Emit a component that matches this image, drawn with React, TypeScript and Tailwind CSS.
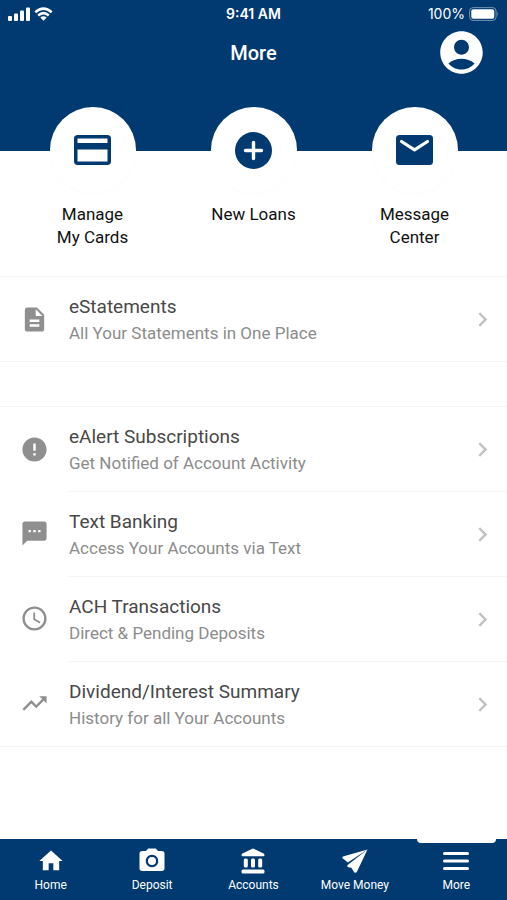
import React from "react";
import type { IconType } from "react-icons";
import {
  MdAccessTime,
  MdAccountCircle,
  MdChevronRight,
  MdDescription,
  MdError,
  MdHome,
  MdPhotoCamera,
  MdTextsms,
  MdTrendingUp,
} from "react-icons/md";

type IconProps = { className?: string };

interface MenuItem {
  title: string;
  subtitle: string;
  icon: IconType;
}

const statements: MenuItem[] = [
  {
    title: "eStatements",
    subtitle: "All Your Statements in One Place",
    icon: MdDescription,
  },
];

const services: MenuItem[] = [
  {
    title: "eAlert Subscriptions",
    subtitle: "Get Notified of Account Activity",
    icon: MdError,
  },
  {
    title: "Text Banking",
    subtitle: "Access Your Accounts via Text",
    icon: MdTextsms,
  },
  {
    title: "ACH Transactions",
    subtitle: "Direct & Pending Deposits",
    icon: MdAccessTime,
  },
  {
    title: "Dividend/Interest Summary",
    subtitle: "History for all Your Accounts",
    icon: MdTrendingUp,
  },
];

function CardIcon({ className }: IconProps) {
  return (
    <svg viewBox="0 0 37 30" className={className} aria-hidden="true">
      <rect x="1.75" y="1.75" width="33.5" height="26.5" rx="2" fill="none" stroke="currentColor" strokeWidth="3.5" />
      <path d="M2 8h33v6.5H2z" fill="currentColor" />
    </svg>
  );
}

function PlusIcon({ className }: IconProps) {
  return (
    <svg viewBox="0 0 37 37" className={className} aria-hidden="true">
      <circle cx="18.5" cy="18.5" r="18.5" fill="currentColor" />
      <path d="M18.5 10.5v16M10.5 18.5h16" stroke="white" strokeWidth="3.4" strokeLinecap="round" />
    </svg>
  );
}

function MailIcon({ className }: IconProps) {
  return (
    <svg viewBox="0 0 37 30" className={className} aria-hidden="true">
      <rect width="37" height="30" rx="3.5" fill="currentColor" />
      <path d="M5.5 6.5L18.5 14.8L31.5 6.5" fill="none" stroke="white" strokeWidth="3.2" strokeLinecap="round" strokeLinejoin="round" />
    </svg>
  );
}

function BankIcon({ className }: IconProps) {
  return (
    <svg viewBox="0 0 24 26" className={className} aria-hidden="true" fill="currentColor">
      <path d="M10.8 0.9Q12 0.3 13.200 0.900L22.600 5.600Q23.600 6.200 23.500 7.200Q23.400 8.200 22.300 8.200H1.700Q0.600 8.200 0.500 7.200Q0.400 6.200 1.400 5.600Z" />
      <rect x="2.800" y="10.500" width="4" height="9" rx="1.500" />
      <rect x="10" y="10.500" width="4" height="9" rx="1.500" />
      <rect x="17.200" y="10.500" width="4" height="9" rx="1.500" />
      <rect x="0.500" y="21.500" width="23" height="4" rx="1.500" />
    </svg>
  );
}

function PlaneIcon({ className }: IconProps) {
  return (
    <svg viewBox="0 0 26 24" className={className} aria-hidden="true" fill="currentColor">
      <path d="M25.500 0.500L1 7.400Q-0.200 8 0.700 9.200L5.800 13.400Z" />
      <path d="M25.500 0.500L5.600 16Q4.600 17.500 6.200 18.200L9.300 18.800L12.200 23.200Q13.600 24.400 14.800 22.900Z" />
    </svg>
  );
}

function MenuIcon({ className }: IconProps) {
  return (
    <svg viewBox="0 0 26 18" className={className} aria-hidden="true">
      <path d="M1.5 1.5h23M1.5 9h23M1.5 16.5h23" stroke="currentColor" strokeWidth="3" strokeLinecap="round" />
    </svg>
  );
}

function SignalIcon() {
  return (
    <svg viewBox="0 0 22 14" className="h-3.5 w-[22px]" fill="currentColor" aria-hidden="true">
      <rect x="0" y="9" width="4" height="5" rx="1" />
      <rect x="6" y="6.500" width="4" height="7.500" rx="1" />
      <rect x="12" y="3.500" width="4" height="10.500" rx="1" />
      <rect x="18" y="0.500" width="4" height="13.500" rx="1" />
    </svg>
  );
}

function WifiIcon() {
  return (
    <svg viewBox="0 0 19 14" className="h-3.5 w-[19px]" aria-hidden="true">
      <path d="M1.300 5.200Q9.500 -2 17.700 5.200M4.200 8.400Q9.500 4 14.800 8.400" fill="none" stroke="currentColor" strokeWidth="2.600" />
      <path d="M6.300 10.500Q9.500 8 12.700 10.500L9.500 13.800Z" fill="currentColor" />
    </svg>
  );
}

function BatteryIcon() {
  return (
    <svg viewBox="0 0 30 14" className="h-3.5 w-[30px]" aria-hidden="true">
      <rect x="0.600" y="0.600" width="26.500" height="12.800" rx="3.500" fill="none" stroke="white" strokeOpacity="0.450" />
      <rect x="2.300" y="2.300" width="23" height="9.400" rx="2" fill="white" />
      <path d="M28.300 4.800q1.700 2.200 0 4.400z" fill="white" fillOpacity="0.500" />
    </svg>
  );
}

const actions = [
  { label: ["Manage", "My Cards"], icon: CardIcon, size: "h-[30px] w-[37px]" },
  { label: ["New Loans"], icon: PlusIcon, size: "size-[37px]" },
  { label: ["Message", "Center"], icon: MailIcon, size: "h-[30px] w-[37px]" },
];

const tabs = [
  { label: "Home", icon: MdHome, size: "size-7" },
  { label: "Deposit", icon: MdPhotoCamera, size: "size-[30px]" },
  { label: "Accounts", icon: BankIcon, size: "h-[26px] w-6" },
  { label: "Move Money", icon: PlaneIcon, size: "h-6 w-[26px]" },
  { label: "More", icon: MenuIcon, size: "h-[18px] w-[26px]", active: true },
];

function MenuList({ items }: { items: MenuItem[] }) {
  return (
    <ul className="border-y border-[#f3f3f3]">
      {items.map((item, i) => (
        <li key={item.title}>
          <a href="#" className="flex items-stretch">
            <span className="flex w-[69px] shrink-0 items-center justify-center text-[#8f8f8f]">
              <item.icon className="size-[29px]" />
            </span>
            <span
              className={
                i > 0
                  ? "flex flex-1 items-center justify-between border-t border-[#f3f3f3]"
                  : "flex flex-1 items-center justify-between"
              }
            >
              <span className="pt-[17px] pb-[15px]">
                <span className="block text-[19px] leading-[26px] text-[#484848]">{item.title}</span>
                <span className="block text-[17px] leading-[26px] text-[#8c8c8c]">{item.subtitle}</span>
              </span>
              <MdChevronRight className="mr-2.5 size-[29px] text-[#c2c2c2]" />
            </span>
          </a>
        </li>
      ))}
    </ul>
  );
}

export default function App() {
  return (
    <div className="flex min-h-screen flex-col bg-white font-['Roboto',sans-serif]">
      {/* Header */}
      <header className="bg-[#003a70] pb-[73px] text-white">
        <div className="grid h-[27px] grid-cols-3 items-center px-2 text-sm">
          <div className="flex items-center gap-1">
            <SignalIcon />
            <WifiIcon />
          </div>
          <span className="text-center font-['Inter',sans-serif] font-semibold">9:41 AM</span>
          <div className="flex items-center justify-end gap-1 font-['Inter',sans-serif]">
            <span>100%</span>
            <BatteryIcon />
          </div>
        </div>
        <div className="grid grid-cols-3 items-center px-5">
          <h1 className="col-start-2 text-center text-xl font-medium">More</h1>
          <button type="button" aria-label="Profile" className="justify-self-end">
            <MdAccountCircle className="size-[51px]" />
          </button>
        </div>
      </header>

      {/* Quick actions overlap the bottom edge of the header */}
      <nav className="-mt-11 mb-[27px] grid grid-cols-3 px-3">
        {actions.map((action) => (
          <a key={action.label[0]} href="#" className="flex flex-col items-center">
            <span className="flex size-[86px] items-center justify-center rounded-full bg-white text-[#003a70] shadow-[0_1px_3px_rgba(0,0,0,0.02)]">
              <action.icon className={action.size} />
            </span>
            <span className="mt-2.5 text-center text-[17px] leading-[23px] text-[#111111]">
              {action.label.map((line) => (
                <span key={line} className="block">
                  {line}
                </span>
              ))}
            </span>
          </a>
        ))}
      </nav>

      <main className="flex flex-1 flex-col gap-11">
        <MenuList items={statements} />
        <MenuList items={services} />
      </main>

      {/* Tab bar */}
      <nav className="grid grid-cols-5 bg-[#003a70] text-white">
        {tabs.map((tab) => (
          <a key={tab.label} href="#" className="relative flex h-[61px] flex-col items-center pt-2">
            {tab.active && <span className="absolute inset-x-[11px] top-0 h-1 rounded-b bg-white" />}
            <span className="flex h-7 items-center">
              <tab.icon className={tab.size} />
            </span>
            <span className="text-xs leading-5">{tab.label}</span>
          </a>
        ))}
      </nav>
    </div>
  );
}
